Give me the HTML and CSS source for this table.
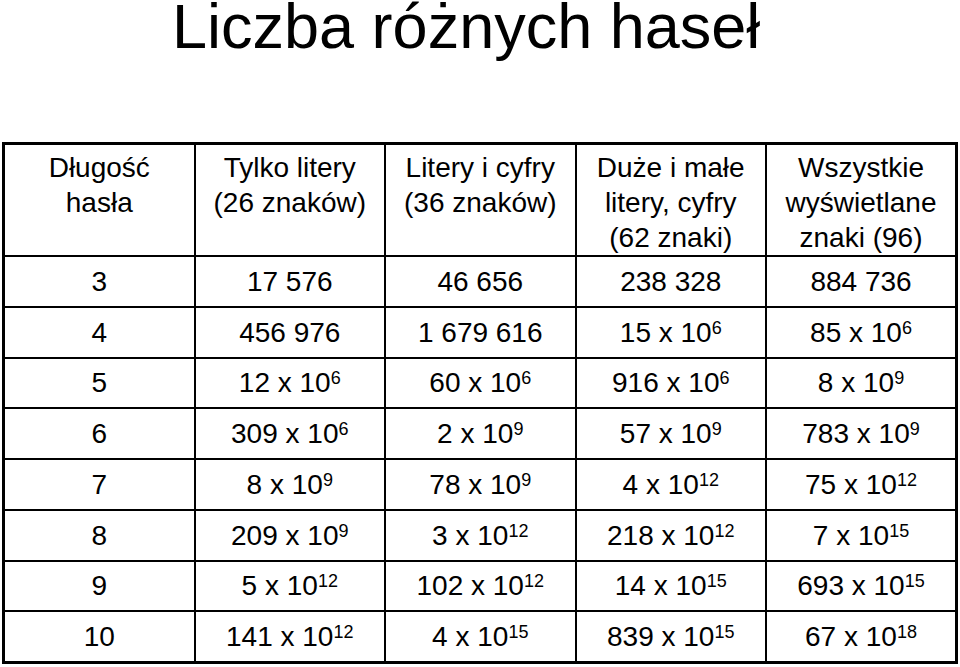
FILE: index.html
```html
<!DOCTYPE html>
<html lang="pl">
<head>
<meta charset="utf-8">
<title>Liczba różnych haseł</title>
<link rel="stylesheet" href="styles.css">
</head>
<body>
<h1 class="title">Liczba różnych haseł</h1>
<table class="grid">
  <colgroup>
    <col class="col">
    <col class="col">
    <col class="col">
    <col class="col">
    <col class="col-last">
  </colgroup>
  <thead>
    <tr class="head">
      <th>Długość<br>hasła</th>
      <th>Tylko litery<br>(26 znaków)</th>
      <th>Litery i cyfry<br>(36 znaków)</th>
      <th>Duże i małe<br>litery, cyfry<br>(62 znaki)</th>
      <th>Wszystkie<br>wyświetlane<br>znaki (96)</th>
    </tr>
  </thead>
  <tbody>
    <tr><td>3</td><td>17 576</td><td>46 656</td><td>238 328</td><td>884 736</td></tr>
    <tr><td>4</td><td>456 976</td><td>1 679 616</td><td>15 x 10<sup class="exp">6</sup></td><td>85 x 10<sup class="exp">6</sup></td></tr>
    <tr><td>5</td><td>12 x 10<sup class="exp">6</sup></td><td>60 x 10<sup class="exp">6</sup></td><td>916 x 10<sup class="exp">6</sup></td><td>8 x 10<sup class="exp">9</sup></td></tr>
    <tr><td>6</td><td>309 x 10<sup class="exp">6</sup></td><td>2 x 10<sup class="exp">9</sup></td><td>57 x 10<sup class="exp">9</sup></td><td>783 x 10<sup class="exp">9</sup></td></tr>
    <tr><td>7</td><td>8 x 10<sup class="exp">9</sup></td><td>78 x 10<sup class="exp">9</sup></td><td>4 x 10<sup class="exp">12</sup></td><td>75 x 10<sup class="exp">12</sup></td></tr>
    <tr><td>8</td><td>209 x 10<sup class="exp">9</sup></td><td>3 x 10<sup class="exp">12</sup></td><td>218 x 10<sup class="exp">12</sup></td><td>7 x 10<sup class="exp">15</sup></td></tr>
    <tr><td>9</td><td>5 x 10<sup class="exp">12</sup></td><td>102 x 10<sup class="exp">12</sup></td><td>14 x 10<sup class="exp">15</sup></td><td>693 x 10<sup class="exp">15</sup></td></tr>
    <tr class="last"><td>10</td><td>141 x 10<sup class="exp">12</sup></td><td>4 x 10<sup class="exp">15</sup></td><td>839 x 10<sup class="exp">15</sup></td><td>67 x 10<sup class="exp">18</sup></td></tr>
  </tbody>
</table>
</body>
</html>
```
FILE: styles.css
```css
html, body {
  margin: 0;
  padding: 0;
  background: #fff;
  color: #000;
  font-family: "Liberation Sans", Arial, sans-serif;
}

.title {
  margin: 0;
  padding-left: 172px;
  font-size: 63px;
  line-height: 52px;
  font-weight: normal;
  white-space: nowrap;
}

.grid {
  margin: 90px 0 0 2px;
  width: 956px;
  table-layout: fixed;
  border-collapse: separate;
  border-spacing: 0;
  border: 3px solid #000;
  font-size: 28px;
  line-height: 35px;
}

.grid .col {
  width: 190.5px;
}

.grid th,
.grid td {
  padding: 0;
  text-align: center;
  font-weight: normal;
  border-right: 2px solid #000;
  border-bottom: 2px solid #000;
  white-space: nowrap;
}

.grid th:last-child,
.grid td:last-child {
  border-right: none;
}

.grid th {
  vertical-align: top;
  padding-top: 5px;
}

.grid td {
  vertical-align: middle;
}

.grid .head {
  height: 112px;
}

.grid tbody tr {
  height: 50.75px;
}

.grid tbody tr.last {
  height: 48.75px;
}

.grid tr.last td {
  border-bottom: none;
}

.exp {
  font-size: 18px;
  line-height: 0;
  vertical-align: 8px;
}
```
